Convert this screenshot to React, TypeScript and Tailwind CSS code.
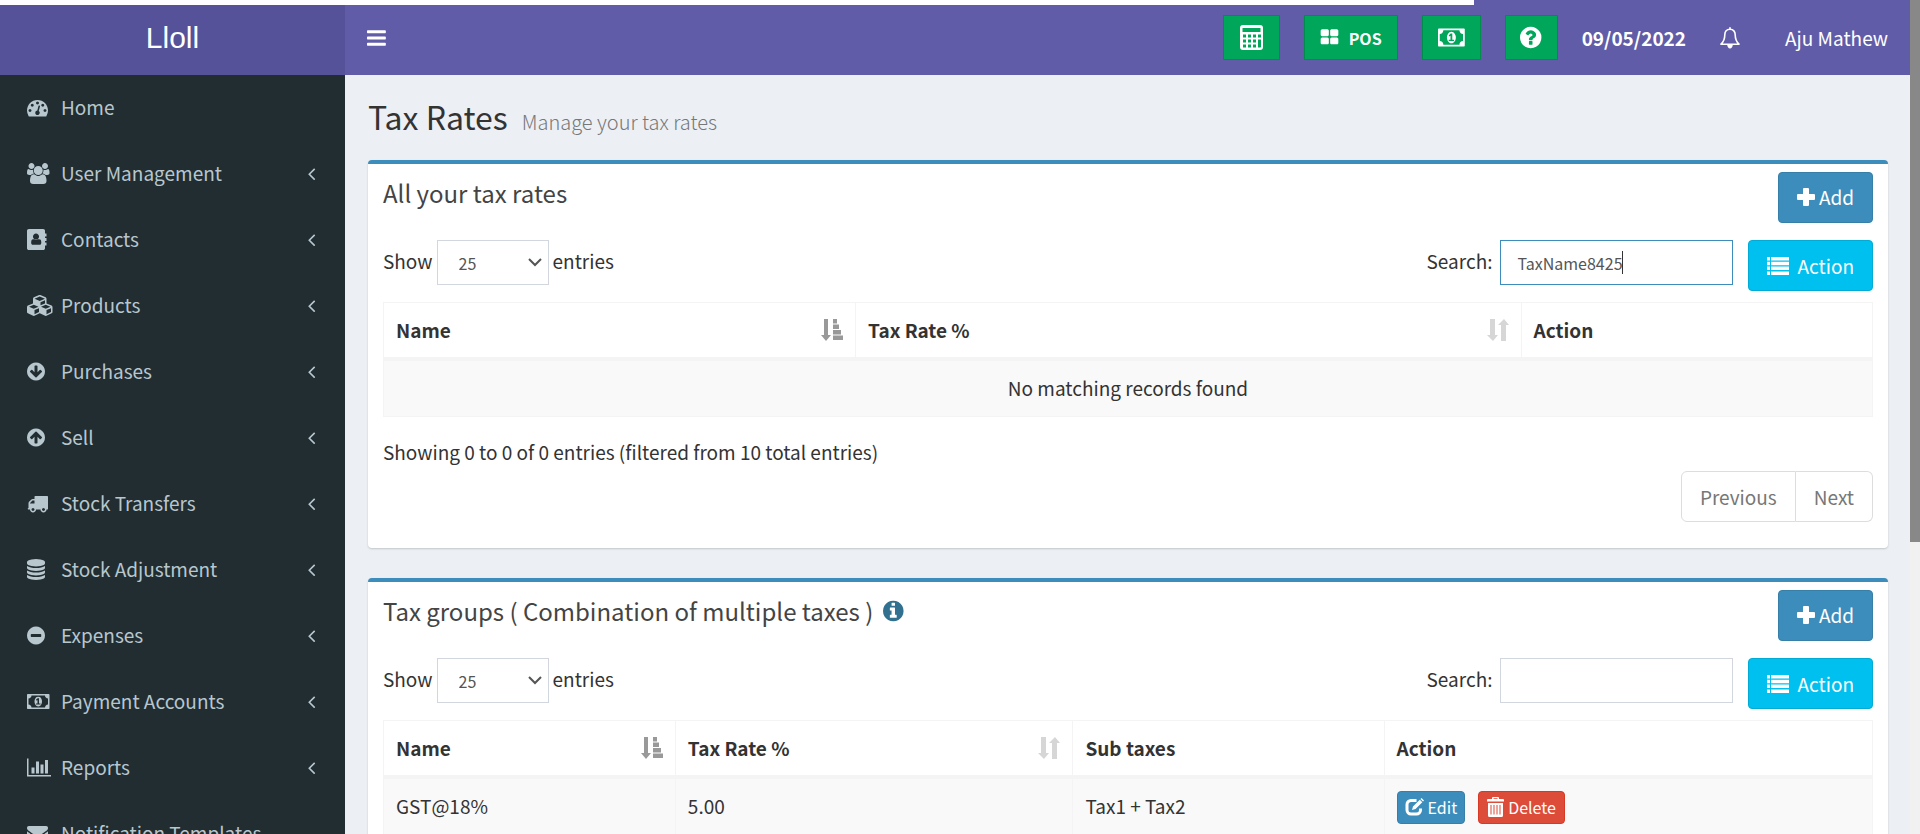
import type { ReactNode } from "react";

const DISC =
  "M1664 896q0 209-103 385.5t-279.5 279.5-385.5 103-385.5-103-279.5-279.5-103-385.5 103-385.5 279.5-279.5 385.5-103 385.5 103 279.5 279.5 103 385.5z";
const DOWN_ARROW =
  "M1412 897q0-27-18-45l-91-91q-18-18-45-18t-45 18l-189 189v-502q0-26-19-45t-45-19h-128q-26 0-45 19t-19 45v502l-189-189q-19-19-45-19t-45 19l-91 91q-18 18-18 45t18 45l362 362 91 91q18 18 45 18t45-18l91-91 362-362q18-18 18-45z";

type Glyph = { w: number; d: string; flip?: boolean };

const glyphs: Record<string, Glyph> = {
  bars: {
    w: 1792,
    d: "M1664 1344v128q0 26-19 45t-45 19h-1408q-26 0-45-19t-19-45v-128q0-26 19-45t45-19h1408q26 0 45 19t19 45zm0-512v128q0 26-19 45t-45 19h-1408q-26 0-45-19t-19-45v-128q0-26 19-45t45-19h1408q26 0 45 19t19 45zm0-512v128q0 26-19 45t-45 19h-1408q-26 0-45-19t-19-45v-128q0-26 19-45t45-19h1408q26 0 45 19t19 45z",
  },
  home: {
    w: 1792,
    d: "M384 1152q0-53-37.5-90.5t-90.5-37.5-90.5 37.5-37.5 90.5 37.5 90.5 90.5 37.5 90.5-37.5 37.5-90.5zm192-448q0-53-37.5-90.5t-90.5-37.5-90.5 37.5-37.5 90.5 37.5 90.5 90.5 37.5 90.5-37.5 37.5-90.5zm428 481l101-382q6-26-7.5-48.5t-38.5-29.5-48 6.5-30 39.5l-101 382q-60 5-107 43.5t-63 98.5q-20 77 20 146t117 89 146-20 89-117q16-60-6-117t-72-91zm660-33q0-53-37.5-90.5t-90.5-37.5-90.5 37.5-37.5 90.5 37.5 90.5 90.5 37.5 90.5-37.5 37.5-90.5zm-640-640q0-53-37.5-90.5t-90.5-37.5-90.5 37.5-37.5 90.5 37.5 90.5 90.5 37.5 90.5-37.5 37.5-90.5zm448 192q0-53-37.5-90.5t-90.5-37.5-90.5 37.5-37.5 90.5 37.5 90.5 90.5 37.5 90.5-37.5 37.5-90.5zm320 448q0 261-141 483-19 29-54 29h-1402q-35 0-54-29-141-221-141-483 0-182 71-348t191-286 286-191 348-71 348 71 286 191 191 286 71 348z",
  },
  users: {
    w: 1920,
    d: "M593 896q-162 5-265 128h-134q-82 0-138-40.5t-56-118.5q0-353 124-353 6 0 43.5 21t97.5 42.5 119 21.5q67 0 133-23-5 37-5 66 0 139 81 256zm1071 637q0 120-73 189.5t-194 69.5h-874q-121 0-194-69.5t-73-189.5q0-53 3.5-103.5t14-109 26.5-108.5 43-97.5 62-81 85.5-53.5 111.5-20q10 0 43 21.5t73 48 107 48 135 21.5 135-21.5 107-48 73-48 43-21.5q61 0 111.5 20t85.5 53.5 62 81 43 97.5 26.5 108.5 14 109 3.5 103.5zm-1024-1277q0 106-75 181t-181 75-181-75-75-181 75-181 181-75 181 75 75 181zm704 384q0 159-112.5 271.5t-271.5 112.5-271.5-112.5-112.5-271.5 112.5-271.5 271.5-112.5 271.5 112.5 112.5 271.5zm576 225q0 78-56 118.5t-138 40.5h-134q-103-123-265-128 81-117 81-256 0-29-5-66 66 23 133 23 59 0 119-21.5t97.5-42.5 43.5-21q124 0 124 353zm-128-609q0 106-75 181t-181 75-181-75-75-181 75-181 181-75 181 75 75 181z",
  },
  contacts: {
    w: 1792,
    d: "M1664 608q0 13-9.500 22.500t-22.500 9.500h-96v128h96q13 0 22.500 9.500t9.500 22.500v192q0 13-9.500 22.500t-22.500 9.500h-96v128h96q13 0 22.500 9.500t9.500 22.500v192q0 13-9.500 22.500t-22.500 9.500h-96v224q0 66-47 113t-113 47h-1216q-66 0-113-47t-47-113v-1472q0-66 47-113t113-47h1216q66 0 113 47t47 113v224h96q13 0 22.500 9.500t9.500 22.500zM1028 644q0-108-76.500-184t-183.500-76-183.500 76-76.500 184q0 107 76.500 183t183.500 76 183.500-76 76.500-183zM980 864q-14 10-32 20-90 55-180 55t-180-55q-18-10-37-20-70 0-115 40t-62 105-20 170q0 67 39.500 118.500t105.500 51.500h576q66 0 105.500-51.500t39.500-118.500q-2-110-20-175t-62-102-158-38z",
  },
  cubes: {
    w: 2304,
    d: "M640 1632l384-192v-314l-384 164v342zm-64-454l404-173-404-173-404 173zm1088 454l384-192v-314l-384 164v342zm-64-454l404-173-404-173-404 173zm-448-293l384-165v-266l-384 164v267zm-64-379l441-189-441-189-441 189zm1088 518v416q0 36-19 67t-52 47l-448 224q-25 14-57 14t-57-14l-448-224q-4-2-7-4-2 2-7 4l-448 224q-25 14-57 14t-57-14l-448-224q-33-16-52-47t-19-67v-416q0-38 21.5-70t56.500-48l434-186v-400q0-38 21.500-70t56.500-48l448-192q23-10 50-10t50 10l448 192q35 16 56.500 48t21.500 70v400l434 186q36 16 57 48t21 70z",
  },
  down: { w: 1792, d: DISC + DOWN_ARROW },
  up: { w: 1792, d: DISC + DOWN_ARROW, flip: true },
  truck: {
    w: 1792,
    d: "M640 1408q0-52-38-90t-90-38-90 38-38 90 38 90 90 38 90-38 38-90zm-384-512h384v-256h-158q-13 0-22 9l-195 195q-9 9-9 22v30zm1280 512q0-52-38-90t-90-38-90 38-38 90 38 90 90 38 90-38 38-90zm256-1088v1024q0 15-4 26.500t-13.500 18.500-16.500 11.500-23.500 6-22.500 2-25.500 0-22.500-.500q0 106-75 181t-181 75-181-75-75-181h-384q0 106-75 181t-181 75-181-75-75-181h-64q-3 0-22.500.500t-25.500 0-22.500-2-23.500-6-16.500-11.500-13.500-18.500-4-26.500q0-26 19-45t45-19v-320q0-8-.500-35t0-38 2.500-34.500 6.500-37 14-30.500 22.500-30l198-198q19-19 50.500-32t58.500-13h160v-192q0-26 19-45t45-19h1024q26 0 45 19t19 45z",
  },
  database: {
    w: 1792,
    d: "M896 768q237 0 443-43t325-127v170q0 69-103 128t-280 93.500-385 34.500-385-34.500-280-93.500-103-128v-170q119 84 325 127t443 43zm0 768q237 0 443-43t325-127v170q0 69-103 128t-280 93.500-385 34.500-385-34.500-280-93.500-103-128v-170q119 84 325 127t443 43zm0-384q237 0 443-43t325-127v170q0 69-103 128t-280 93.500-385 34.500-385-34.500-280-93.500-103-128v-170q119 84 325 127t443 43zm0-1152q208 0 385 34.500t280 93.500 103 128v128q0 69-103 128t-280 93.500-385 34.500-385-34.500-280-93.500-103-128v-128q0-69 103-128t280-93.500 385-34.500z",
  },
  minus: {
    w: 1792,
    d: DISC + "M1344 960v-128q0-26-19-45t-45-19h-768q-26 0-45 19t-19 45v128q0 26 19 45t45 19h768q26 0 45-19t19-45z",
  },
  money: {
    w: 1920,
    d: "M768 1152h384v-96h-128v-448h-114l-148 137 77 80q42-37 55-57h2v288h-128v96zm512-256q0 70-21 142t-59.500 134-101.500 101-138 39-138-39-101.500-101-59.500-134-21-142 21-142 59.500-134 101.500-101 138-39 138 39 101.500 101 59.500 134 21 142zm512 256v-512q-106 0-181-75t-75-181h-1152q0 106-75 181t-181 75v512q106 0 181 75t75 181h1152q0-106 75-181t181-75zm128-832v1152q0 26-19 45t-45 19h-1792q-26 0-45-19t-19-45v-1152q0-26 19-45t45-19h1792q26 0 45 19t19 45z",
  },
  chart: {
    w: 2048,
    d: "M640 896v512h-256v-512h256zm384-512v1024h-256v-1024h256zm1024 1152v128h-2048v-1536h128v1408h1920zm-640-896v768h-256v-768h256zm384-384v1152h-256v-1152h256z",
  },
  envelope: {
    w: 1792,
    d: "M1792 710v794q0 66-47 113t-113 47h-1472q-66 0-113-47t-47-113v-794q44 49 101 87 362 246 497 345 57 42 92.500 65.500t94.500 48 110 24.500h2q51 0 110-24.500t94.500-48 92.500-65.500q170-123 498-345 57-39 100-87zm0-294q0 79-49 151t-122 123q-376 261-468 325-10 7-42.500 30.500t-54 38-52 32.500-57.500 27-50 9h-2q-23 0-50-9t-57.500-27-52-32.500-54-38-42.500-30.500q-91-64-262-182.500t-205-142.500q-62-42-117-115.500t-55-136.500q0-78 41.500-130t118.500-52h1472q65 0 112.500 47t47.500 113z",
  },
  question: {
    w: 1792,
    d: DISC + "M1024 1376v-192q0-14-9-23t-23-9h-192q-14 0-23 9t-9 23v192q0 14 9 23t23 9h192q14 0 23-9t9-23zm256-672q0-88-55.500-163t-138.500-116-170-41q-243 0-371 213-15 24 8 42l132 100q7 6 19 6 16 0 25-12 53-68 86-92 34-24 86-24 48 0 85.500 26t37.500 59q0 38-20 61t-68 45q-63 28-115.500 86.500t-52.500 125.500v36q0 14 9 23t23 9h192q14 0 23-9t9-23q0-19 21.500-49.500t54.500-49.500q32-18 49-28.500t46-35 44.500-48 28-60.500 12.500-81z",
  },
  info: {
    w: 1792,
    d: DISC + "M1152 1376v-160q0-14-9-23t-23-9h-96v-512q0-14-9-23t-23-9h-320q-14 0-23 9t-9 23v160q0 14 9 23t23 9h96v320h-96q-14 0-23 9t-9 23v160q0 14 9 23t23 9h448q14 0 23-9t9-23zm-128-896v-160q0-14-9-23t-23-9h-192q-14 0-23 9t-9 23v160q0 14 9 23t23 9h192q14 0 23-9t9-23z",
  },
  thLarge: {
    w: 1792,
    d: "M832 1024v384q0 52-38 90t-90 38h-512q-52 0-90-38t-38-90v-384q0-52 38-90t90-38h512q52 0 90 38t38 90zm0-768v384q0 52-38 90t-90 38h-512q-52 0-90-38t-38-90v-384q0-52 38-90t90-38h512q52 0 90 38t38 90zm896 768v384q0 52-38 90t-90 38h-512q-52 0-90-38t-38-90v-384q0-52 38-90t90-38h512q52 0 90 38t38 90zm0-768v384q0 52-38 90t-90 38h-512q-52 0-90-38t-38-90v-384q0-52 38-90t90-38h512q52 0 90 38t38 90z",
  },
  angleLeft: {
    w: 1792,
    d: "M1203 544q0 13-10 23l-393 393 393 393q10 10 10 23t-10 23l-50 50q-10 10-23 10t-23-10l-466-466q-10-10-10-23t10-23l466-466q10-10 23-10t23 10l50 50q10 10 10 23z",
  },
};

/* Trims the side bearing so that every glyph starts at its left edge. */
const bearing: Record<string, number> = { contacts: 0, down: 128, up: 128, database: 128, minus: 128, bars: 128, question: 128, info: 128 };

function Icon({ name, className }: { name: string; className: string }) {
  const g = glyphs[name];
  const x = bearing[name] ?? 0;
  return (
    <svg aria-hidden="true" viewBox={`${x} 0 ${g.w - x} 1792`} className={`w-auto shrink-0 overflow-visible ${className}`} fill="currentColor">
      <path fillRule="evenodd" d={g.d} transform={g.flip ? "rotate(180 896 896)" : undefined} />
    </svg>
  );
}

const Calculator = () => (
  <svg aria-hidden="true" viewBox="0 0 23 25" className="h-[25px] w-[23px]" fill="none" stroke="currentColor">
    <path strokeWidth="2" d="M3 1h17a2 2 0 0 1 2 2v19a2 2 0 0 1-2 2H3a2 2 0 0 1-2-2V3a2 2 0 0 1 2-2z" />
    <path fill="currentColor" stroke="none" fillRule="evenodd" d="M1 1h21v23H1zM2.500 3v4h18V3zM3 9.500v3h3v-3zM8 9.500v3h3v-3zM13 9.500v3h3v-3zM18 9.500v3h3v-3zM3 14.500v3h3v-3zM8 14.500v3h3v-3zM13 14.500v3h3v-3zM18 14.500v8h3v-8zM3 19.500v3h3v-3zM8 19.500v3h3v-3zM13 19.500v3h3v-3z" />
  </svg>
);

const Bell = () => (
  <svg aria-hidden="true" viewBox="0 0 20 22" className="h-[22px] w-5" fill="none" stroke="currentColor" strokeWidth="1.600">
    <path strokeLinejoin="round" d="M10 2.200c-3.400 0-5.200 2.600-5.200 5.600 0 5.200-1.500 7.300-3.800 9.400h18c-2.300-2.100-3.800-4.200-3.800-9.400 0-3-1.800-5.600-5.200-5.600z" />
    <path strokeLinecap="round" d="M10 .8v1.400" />
    <path fill="currentColor" stroke="none" d="M7.200 17.500h5.600c0 2.400-1.200 3.900-2.800 3.900s-2.800-1.500-2.800-3.900z" />
  </svg>
);

const Plus = () => (
  <svg aria-hidden="true" viewBox="0 0 18 18" className="h-[18px] w-[18px]" fill="currentColor">
    <path d="M7 0h4q1 0 1 1v5h5q1 0 1 1v4q0 1-1 1h-5v5q0 1-1 1H7q-1 0-1-1v-5H1q-1 0-1-1V7q0-1 1-1h5V1q0-1 1-1z" />
  </svg>
);

const ListIcon = () => (
  <svg aria-hidden="true" viewBox="0 0 22 18" className="h-[18px] w-[22px]" fill="currentColor">
    <path d="M0 0h3v3.500H0zM4 0h18v3.500H4zM0 4.800h3v3.500H0zM4 4.800h18v3.500H4zM0 9.600h3v3.500H0zM4 9.600h18v3.500H4zM0 14.500h3V18H0zM4 14.500h18V18H4z" />
  </svg>
);

const EditIcon = () => (
  <svg aria-hidden="true" viewBox="0 0 19 18" className="h-[18px] w-[19px]" fill="none" stroke="currentColor">
    <path strokeWidth="3" d="M11.500 2.500H6a4 4 0 0 0-4 4V12a4 4 0 0 0 4 4h5.500a4 4 0 0 0 4-4v-1.500" />
    <path fill="currentColor" stroke="none" d="M7 12l1-3.600L14.800 1.700l2.500 2.500-6.800 6.800zM15.500 1l1-1 2.500 2.500-1 1z" />
  </svg>
);

const TrashIcon = () => (
  <svg aria-hidden="true" viewBox="0 0 17 20" className="h-5 w-[17px]" fill="currentColor">
    <path fillRule="evenodd" d="M5 2V1q0-1 1-1h5q1 0 1 1v1h4q1 0 1 1v1.500H0V3q0-1 1-1zM6.500 1.200V2h4v-.8zM1 6h15v12.500q0 1.500-1.500 1.500h-12Q1 20 1 18.500zM3.500 8v9.500h1V8zM6.500 8v9.500h1V8zM9.500 8v9.500h1V8zM12.500 8v9.500h1V8z" />
  </svg>
);

const SortAsc = () => (
  <svg aria-hidden="true" viewBox="0 0 22 22" className="h-[22px] w-[22px] text-[#999]" fill="currentColor">
    <path d="M3 0h4v16h3l-5 6-5-6h3zM12 0h4v4.500h-4zM12 5.500h6V10h-6zM12 11h8v4.500h-8zM12 16.500h10V21H12z" />
  </svg>
);

const SortBoth = () => (
  <svg aria-hidden="true" viewBox="0 0 22 22" className="h-[22px] w-[22px] text-[#d6d6d6]" fill="currentColor">
    <path d="M3 0h5v16h3l-5 6-6-6h3zM14 22h5V6h3l-5-6-6 6h3z" />
  </svg>
);

const menu = [
  { label: "Home", icon: "home", leaf: true },
  { label: "User Management", icon: "users" },
  { label: "Contacts", icon: "contacts" },
  { label: "Products", icon: "cubes" },
  { label: "Purchases", icon: "down" },
  { label: "Sell", icon: "up" },
  { label: "Stock Transfers", icon: "truck" },
  { label: "Stock Adjustment", icon: "database" },
  { label: "Expenses", icon: "minus" },
  { label: "Payment Accounts", icon: "money" },
  { label: "Reports", icon: "chart" },
  { label: "Notification Templates", icon: "envelope", leaf: true },
];

const greenButton = "flex h-[45px] items-center justify-center border border-[#008d4c] bg-[#00a65a]";

type Column = { label: string; sort?: "asc" | "both"; width: string };

type TaxBoxProps = {
  id: string;
  title: ReactNode;
  search: string;
  focused?: boolean;
  columns: Column[];
  children: ReactNode;
  footer?: ReactNode;
};

function TaxBox({ id, title, search, focused, columns, children, footer }: TaxBoxProps) {
  return (
    <section className="rounded-[4px] border-t-4 border-[#3c8dbc] bg-white px-[15px] pb-[26px] shadow-[0_1px_2px_rgba(0,0,0,0.18)]">
      <div className="flex items-start justify-between pt-2">
        <h2 className="flex items-center gap-2.5 pt-[3px] text-2xl leading-9 text-[#444]">{title}</h2>
        <button className="flex h-[51px] items-center gap-1 rounded-[4px] border border-[#367fa9] bg-[#3c8dbc] px-[18px] pb-0.5 text-white">
          <Plus />
          Add
        </button>
      </div>
      <div className="flex items-start justify-between pt-[17px]">
        <div className="flex items-start gap-1">
          <label htmlFor={`${id}-length`} className="leading-[42px]">
            Show
          </label>
          <div className="relative">
            <select id={`${id}-length`} defaultValue="25" className="block h-[45px] w-28 appearance-none border border-[#d2d6de] bg-white pl-[21px] text-base text-[#555]">
              <option>25</option>
              <option>50</option>
              <option>100</option>
            </select>
            <svg aria-hidden="true" viewBox="0 0 14 9" className="pointer-events-none absolute top-[18px] right-[7px] h-[9px] w-3.5 text-[#555]" fill="none" stroke="currentColor" strokeWidth="2">
              <path d="M1 1l6 6 6-6" />
            </svg>
          </div>
          <span className="leading-[42px]">entries</span>
        </div>
        <div className="flex items-start">
          <label htmlFor={`${id}-search`} className="pr-2 leading-[42px]">
            Search:
          </label>
          <div className="relative mr-[15px]">
            <input
              id={`${id}-search`}
              type="text"
              defaultValue={search}
              className={`block h-[45px] w-[233px] border px-4 text-base text-[#555] outline-none ${focused ? "border-[#3c8dbc]" : "border-[#d2d6de]"}`}
            />
            {focused && <span className="absolute top-[11px] left-[122px] h-[23px] w-px bg-[#333]" />}
          </div>
          <button className="flex h-[51px] items-center gap-2 rounded-[4px] border border-[#00acd6] bg-[#00c0ef] px-[18px] text-white">
            <ListIcon />
            Action
          </button>
        </div>
      </div>
      <table className="mt-[11px] w-full table-fixed border-collapse text-left">
        <thead>
          <tr>
            {columns.map((c) => (
              <th key={c.label} className={`h-[56px] border border-b-4 border-[#f4f4f4] px-3 font-bold ${c.width}`}>
                <div className="flex items-center justify-between">
                  {c.label}
                  {c.sort === "asc" && <SortAsc />}
                  {c.sort === "both" && <SortBoth />}
                </div>
              </th>
            ))}
          </tr>
        </thead>
        <tbody>{children}</tbody>
      </table>
      {footer}
    </section>
  );
}

const cell = "h-[58px] border border-[#f4f4f4] bg-[#f9f9f9] px-3";

export default function App() {
  return (
    <div className="relative flex h-screen overflow-hidden bg-[#ecf0f5] font-['Noto_Sans_CJK_SC',sans-serif] text-[19px] leading-[30px] text-[#333]">
      <aside className="flex w-[345px] shrink-0 flex-col bg-[#222d32]">
        <a href="#" className="flex h-[75px] shrink-0 items-center justify-center bg-[#555299] font-['Liberation_Sans',sans-serif] text-3xl font-light text-white">
          Lloll
        </a>
        <nav>
          {menu.map((m) => (
            <a key={m.label} href="#" className="flex h-[66px] items-center pr-[23px] pb-0.5 pl-[27px] text-[#b8c7ce]">
              <span className="mr-1 flex w-[30px] shrink-0 items-center">
                <Icon name={m.icon} className="h-[21px]" />
              </span>
              <span className="flex-1 whitespace-nowrap">{m.label}</span>
              {!m.leaf && <Icon name="angleLeft" className="h-[21px]" />}
            </a>
          ))}
        </nav>
      </aside>

      <div className="min-w-0 flex-1">
        <header className="flex h-[75px] items-center justify-between bg-[#605ca8] pr-[22px] pl-[22px] text-white">
          <button aria-label="Toggle navigation">
            <Icon name="bars" className="h-[22px]" />
          </button>
          <div className="flex items-center">
            <div className="flex gap-6 pr-6">
              <button aria-label="Calculator" className={`${greenButton} w-[57px]`}>
                <Calculator />
              </button>
              <button className={`${greenButton} w-[94px] gap-2.5 text-base font-bold`}>
                <Icon name="thLarge" className="h-[19px]" />
                POS
              </button>
              <button aria-label="Register details" className={`${greenButton} w-[59px]`}>
                <Icon name="money" className="h-[25px]" />
              </button>
              <button aria-label="Help" className={`${greenButton} w-[53px]`}>
                <Icon name="question" className="h-[25px]" />
              </button>
            </div>
            <span className="font-bold">09/05/2022</span>
            <button aria-label="Notifications" className="pr-[45px] pl-[34px]">
              <Bell />
            </button>
            <a href="#">Aju Mathew</a>
          </div>
        </header>

        <main className="pr-[22px] pl-[23px]">
          <div className="flex items-baseline gap-[14px] pt-[21px] pb-6">
            <h1 className="text-[32px] leading-10">Tax Rates</h1>
            <small className="text-xl font-light text-[#777]">Manage your tax rates</small>
          </div>
          <div className="flex flex-col gap-[30px]">
            <TaxBox
              id="rates"
              title="All your tax rates"
              search="TaxName8425"
              focused
              columns={[
                { label: "Name", sort: "asc", width: "w-[31.7%]" },
                { label: "Tax Rate %", sort: "both", width: "w-[44.7%]" },
                { label: "Action", width: "w-[23.6%]" },
              ]}
              footer={
                <div className="pt-5">
                  <p>Showing 0 to 0 of 0 entries (filtered from 10 total entries)</p>
                  <div className="mt-1 flex justify-end text-[#777]">
                    <button className="h-[51px] rounded-l-[6px] border border-[#ddd] px-[18px]">Previous</button>
                    <button className="h-[51px] rounded-r-[6px] border border-l-0 border-[#ddd] px-[18px]">Next</button>
                  </div>
                </div>
              }
            >
              <tr>
                <td colSpan={3} className={`${cell} text-center`}>
                  No matching records found
                </td>
              </tr>
            </TaxBox>
            <TaxBox
              id="groups"
              title={
                <>
                  Tax groups ( Combination of multiple taxes )
                  <Icon name="info" className="h-6 text-[#31708f]" />
                </>
              }
              search=""
              columns={[
                { label: "Name", sort: "asc", width: "w-[19.6%]" },
                { label: "Tax Rate %", sort: "both", width: "w-[26.7%]" },
                { label: "Sub taxes", width: "w-[20.9%]" },
                { label: "Action", width: "w-[32.8%]" },
              ]}
            >
              <tr>
                <td className={cell}>GST@18%</td>
                <td className={cell}>5.00</td>
                <td className={cell}>Tax1 + Tax2</td>
                <td className={cell}>
                  <div className="flex gap-[13px] pt-0.5 text-base text-white">
                    <button className="flex h-[33px] items-center gap-1 rounded-[4px] border border-[#367fa9] bg-[#3c8dbc] px-[7px]">
                      <EditIcon />
                      Edit
                    </button>
                    <button className="flex h-[33px] items-center gap-1 rounded-[4px] border border-[#d73925] bg-[#dd4b39] px-2">
                      <TrashIcon />
                      Delete
                    </button>
                  </div>
                </td>
              </tr>
            </TaxBox>
          </div>
        </main>
      </div>

      <div className="w-[10px] shrink-0 bg-[#f1f1f1]">
        <div className="h-[65%] bg-[#888]" />
      </div>
      <div className="absolute top-0 left-0 h-[5px] w-[1474px] bg-white" />
    </div>
  );
}
